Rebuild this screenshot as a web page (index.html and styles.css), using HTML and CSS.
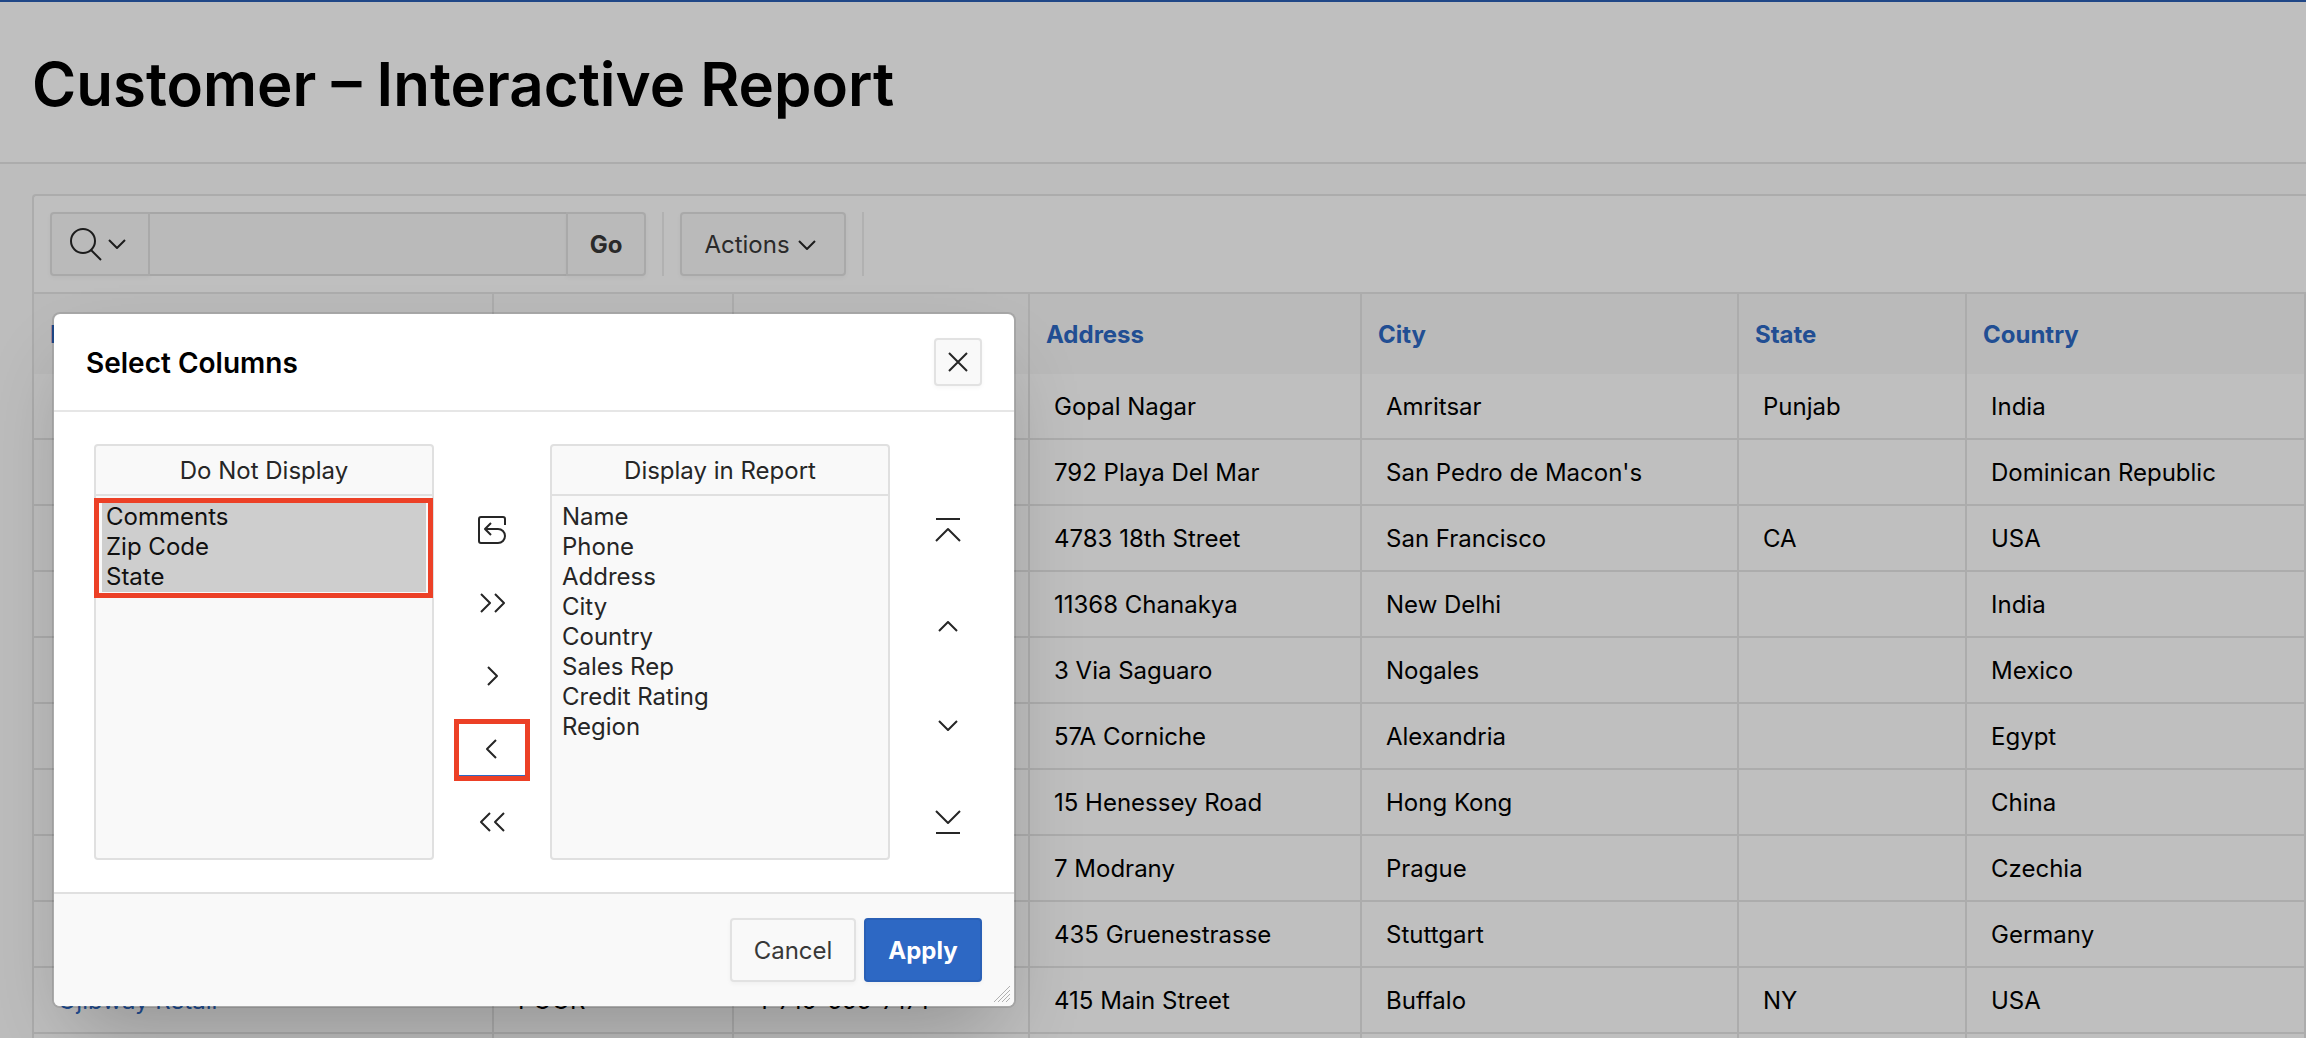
FILE: index.html
```html
<!DOCTYPE html>
<html lang="en">
<head>
<meta charset="utf-8">
<title>Customer – Interactive Report</title>
<link rel="stylesheet" href="styles.css">
</head>
<body>
<div class="page">
  <header class="page-title"><h1>Customer – Interactive Report</h1></header>
  <main class="report">
    <div class="toolbar">
      <div class="search">
        <button class="btn search-menu" type="button" aria-label="Select columns to search">
          <svg width="33" height="34" viewBox="0 0 33 34"><circle cx="14" cy="14" r="12"/><path d="M22 23l10 10"/></svg>
          <svg width="18" height="12" viewBox="0 0 18 12"><path d="M1 2l8 8 8-8"/></svg>
        </button>
        <input class="search-box" type="text" aria-label="Search report">
        <button class="btn go" type="button">Go</button>
      </div>
      <div class="actions">
        <button class="btn actions-menu" type="button">Actions
          <svg width="18" height="12" viewBox="0 0 18 12"><path d="M1 2l8 8 8-8"/></svg>
        </button>
      </div>
    </div>
    <table class="grid">
      <colgroup><col class="c-name"><col class="c-credit"><col class="c-phone"><col class="c-address"><col class="c-city"><col class="c-state"><col class="c-country"></colgroup>
      <thead><tr><th><a href="#">Name</a></th><th></th><th></th><th><a href="#">Address</a></th><th><a href="#">City</a></th><th><a href="#">State</a></th><th><a href="#">Country</a></th></tr></thead>
      <tbody>
        <tr><td></td><td></td><td></td><td>Gopal Nagar</td><td>Amritsar</td><td>Punjab</td><td>India</td></tr>
        <tr><td></td><td></td><td></td><td>792 Playa Del Mar</td><td>San Pedro de Macon's</td><td></td><td>Dominican Republic</td></tr>
        <tr><td></td><td></td><td></td><td>4783 18th Street</td><td>San Francisco</td><td>CA</td><td>USA</td></tr>
        <tr><td></td><td></td><td></td><td>11368 Chanakya</td><td>New Delhi</td><td></td><td>India</td></tr>
        <tr><td></td><td></td><td></td><td>3 Via Saguaro</td><td>Nogales</td><td></td><td>Mexico</td></tr>
        <tr><td></td><td></td><td></td><td>57A Corniche</td><td>Alexandria</td><td></td><td>Egypt</td></tr>
        <tr><td></td><td></td><td></td><td>15 Henessey Road</td><td>Hong Kong</td><td></td><td>China</td></tr>
        <tr><td></td><td></td><td></td><td>7 Modrany</td><td>Prague</td><td></td><td>Czechia</td></tr>
        <tr><td></td><td></td><td></td><td>435 Gruenestrasse</td><td>Stuttgart</td><td></td><td>Germany</td></tr>
        <tr><td><a href="#">Ojibway Retail</a></td><td>POOR</td><td>1-716-555-7171</td><td>415 Main Street</td><td>Buffalo</td><td>NY</td><td>USA</td></tr>
        <tr><td></td><td></td><td></td><td></td><td></td><td></td><td></td></tr>
      </tbody>
    </table>
  </main>
</div>
<div class="overlay"></div>
<section class="dialog" role="dialog" aria-labelledby="dialog-title">
  <header class="dialog-head">
    <h2 id="dialog-title">Select Columns</h2>
    <button class="btn close" type="button" aria-label="Close"><svg width="20" height="20" viewBox="0 0 20 20"><path d="M1 1l18 18M19 1L1 19"/></svg></button>
  </header>
  <div class="dialog-body">
    <div class="list">
      <label for="hidden-cols">Do Not Display</label>
      <select id="hidden-cols" multiple>
        <option selected>Comments</option><option selected>Zip Code</option><option selected>State</option>
      </select>
      <span class="callout callout-list"></span>
    </div>
    <div class="movers">
      <button type="button" aria-label="Reset"><svg width="28" height="28" viewBox="0 0 28 28"><path d="M27 9V3a2 2 0 0 0-2-2H3a2 2 0 0 0-2 2v22a2 2 0 0 0 2 2h17a7 7 0 0 0 0-14H7M13 7l-6 6 6 6"/></svg></button>
      <button type="button" aria-label="Move all"><svg width="26" height="20" viewBox="0 0 26 20"><path d="M2 1l9 9-9 9M16 1l9 9-9 9"/></svg></button>
      <button type="button" aria-label="Move"><svg width="20" height="20" viewBox="0 0 20 20"><path d="M6 1l9 9-9 9"/></svg></button>
      <button class="is-focused" type="button" aria-label="Remove"><svg width="20" height="20" viewBox="0 0 20 20"><path d="M14 1l-9 9 9 9"/></svg><span class="callout callout-button"></span></button>
      <button type="button" aria-label="Remove all"><svg width="26" height="20" viewBox="0 0 26 20"><path d="M11 1l-9 9 9 9M25 1l-9 9 9 9"/></svg></button>
    </div>
    <div class="list">
      <label for="shown-cols">Display in Report</label>
      <select id="shown-cols" multiple>
        <option>Name</option><option>Phone</option><option>Address</option><option>City</option><option>Country</option><option>Sales Rep</option><option>Credit Rating</option><option>Region</option>
      </select>
    </div>
    <div class="movers">
      <button type="button" aria-label="Top"><svg width="26" height="26" viewBox="0 0 26 26"><path d="M1 2h24M1 24l12-12 12 12"/></svg></button>
      <button type="button" aria-label="Up"><svg width="20" height="12" viewBox="0 0 20 12"><path d="M1 10l9-9 9 9"/></svg></button>
      <button type="button" aria-label="Down"><svg width="20" height="12" viewBox="0 0 20 12"><path d="M1 2l9 9 9-9"/></svg></button>
      <button type="button" aria-label="Bottom"><svg width="26" height="26" viewBox="0 0 26 26"><path d="M1 2l12 12 12-12M1 24h24"/></svg></button>
    </div>
  </div>
  <footer class="dialog-foot">
    <button class="btn cancel" type="button">Cancel</button>
    <button class="btn apply" type="button">Apply</button>
    <svg class="resizer" width="16" height="16" viewBox="0 0 16 16"><path d="M0 16L16 0M4 16L16 4M8 16l8-8M12 16l4-4"/></svg>
  </footer>
</section>
</body>
</html>
```
FILE: styles.css
```css
* { box-sizing: border-box; }
body { margin: 0; height: 100vh; overflow: hidden; position: relative; background: #fcfcfc; color: #000; font: 24px/32px Inter, "Liberation Sans", sans-serif; }
button, input, select { font: inherit; color: inherit; }
a { color: #2d68c4; text-decoration: none; }
svg { fill: none; stroke: #262626; stroke-width: 2; stroke-linejoin: round; flex: none; display: block; }
.page { height: 100%; overflow: hidden; border-top: 2px solid #2b5fb4; }
.page-title { display: flex; align-items: center; height: 162px; padding: 4px 32px 0; background: #fff; border-bottom: 2px solid #e6e6e6; }
h1, h2 { margin: 0; font-weight: 600; }
h1 { font-size: 60px; line-height: 80px; }
.report { margin: 30px 0 0 32px; background: #fff; border: solid #e6e6e6; border-width: 2px 0 0 2px; border-radius: 4px 0 0 0; }
.toolbar { display: flex; padding: 16px; }
.search { display: flex; width: 614px; padding-right: 16px; border-right: 2px solid #ededed; }
.btn { display: flex; align-items: center; justify-content: center; gap: 8px; height: 64px; padding: 2px 0 0; background: #f9f9f9; border: 2px solid #e2e2e2; border-radius: 4px; color: #383838; box-shadow: 0 2px 4px rgba(0, 0, 0, .04); }
.search-menu { width: 100px; gap: 6px; padding: 0 6px 0 0; border-radius: 4px 0 0 4px; }
.search-box { flex: 1; min-width: 0; height: 64px; padding: 0 16px; background: #f9f9f9; border: solid #dedede; border-width: 2px 0; outline: none; }
.go { width: 80px; border-radius: 0 4px 4px 0; font-weight: 700; }
.actions { display: flex; padding: 0 16px; border-right: 2px solid #ededed; }
.actions-menu { width: 166px; padding: 2px 6px 0 0; }
.grid { width: 100%; border-collapse: separate; border-spacing: 0; table-layout: fixed; border-top: 2px solid #e6e6e6; }
.c-name { width: 460px; } .c-credit { width: 240px; } .c-phone { width: 296px; } .c-address { width: 332px; } .c-city { width: 377px; } .c-state { width: 228px; }
th, td { border-right: 2px solid #e6e6e6; text-align: left; white-space: nowrap; }
th { height: 80px; padding: 2px 16px 0; background: #f9f9f9; font-weight: 700; }
td { height: 66px; padding: 2px 24px 0; border-bottom: 2px solid #e6e6e6; }
.overlay { position: absolute; inset: 0; background: rgba(0, 0, 0, .25); }
.dialog { position: absolute; left: 52px; top: 312px; width: 964px; border: 2px solid rgba(0, 0, 0, .1); border-radius: 8px; background: #fff; background-clip: padding-box; box-shadow: 0 40px 80px -20px rgba(0, 0, 0, .24); }
.dialog-head { display: flex; align-items: center; justify-content: space-between; height: 98px; padding: 0 32px; border-bottom: 2px solid #e6e6e6; }
h2 { padding-top: 2px; font-size: 28px; line-height: 40px; }
.close { width: 48px; height: 48px; padding: 0; }
.dialog-body { display: flex; align-items: flex-start; padding: 32px 8px 32px 40px; }
.list { position: relative; display: flex; flex-direction: column; width: 340px; height: 416px; border: 2px solid #e0e0e0; border-radius: 4px; background: #f9f9f9; color: #262626; }
.list label { height: 50px; line-height: 50px; border-bottom: 2px solid #e0e0e0; text-align: center; }
.list select { flex: 1; padding: 6px; border: 0; background: none; overflow: hidden; outline: none; }
.list option { height: 30px; padding: 0 4px; line-height: 30px; min-height: 30px; }
.list option:checked { background: #cecece linear-gradient(#cecece, #cecece); }
.callout { position: absolute; border: 5px solid #ec4026; pointer-events: none; }
.callout-list { inset: 52px -1px auto -2px; height: 100px; }
.callout-button { inset: -2px -2px -4px; }
.movers { display: flex; flex: 1; flex-direction: column; align-items: center; justify-content: space-between; height: 406px; padding-top: 58px; }
.movers button { position: relative; display: flex; align-items: center; justify-content: center; width: 72px; height: 56px; padding: 0; border: 0; background: none; }
.movers .is-focused { border-radius: 4px; box-shadow: inset 0 -2px 0 #2d68c4; }
.dialog-foot { position: relative; display: flex; justify-content: flex-end; gap: 8px; height: 114px; padding: 24px 32px; background: #f9f9f9; border-top: 2px solid #e0e0e0; border-radius: 0 0 6px 6px; }
.cancel { width: 126px; }
.apply { width: 118px; background: #2d68c4; border-color: #2a60b6; color: #fff; font-weight: 700; }
.resizer { position: absolute; right: 4px; bottom: 4px; stroke: #b0b0b0; stroke-width: 1; }
```
